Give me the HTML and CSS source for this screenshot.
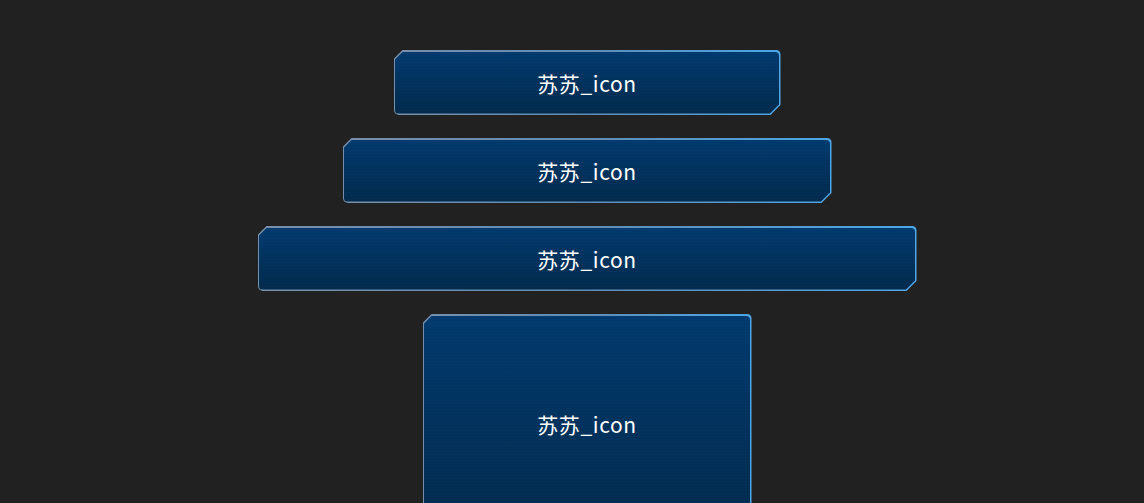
FILE: index.html
```html
<!DOCTYPE html>
<html lang="zh-CN">
<head>
  <meta charset="UTF-8">
  <title>苏苏_icon</title>
  <link rel="stylesheet" href="styles.css">
</head>
<body>

  <!-- Button list -->
  <div class="stack">
    <div class="tech-btn btn-sm">
      <div class="tech-inner">苏苏_icon</div>
    </div>
    <div class="tech-btn btn-md">
      <div class="tech-inner">苏苏_icon</div>
    </div>
    <div class="tech-btn btn-lg">
      <div class="tech-inner">苏苏_icon</div>
    </div>
    <div class="tech-btn btn-tall">
      <div class="tech-inner">苏苏_icon</div>
    </div>
  </div>

</body>
</html>
```

FILE: styles.css
```css
* {
  box-sizing: border-box;
  margin: 0;
  padding: 0;
}

body, html {
  height: 100%;
  background: #212121;
  font-family: "Noto Sans CJK SC", "Noto Sans", sans-serif;
  overflow: hidden;
}

.stack {
  display: flex;
  flex-direction: column;
  align-items: center;
  gap: 23px;
  padding-top: 50px;
  padding-left: 30px;
}

.tech-btn {
  height: 65px;
  padding: 1.5px;
  border-radius: 5px;
  background: linear-gradient(90deg, #7790aa 0%, #5f8db5 50%, #4ea6e6 100%);
  clip-path: polygon(9px 0, 100% 0, 100% calc(100% - 10px), calc(100% - 10px) 100%, 0 100%, 0 9px);
}

.tech-inner {
  height: 100%;
  display: flex;
  align-items: center;
  justify-content: center;
  border-radius: 4px;
  background:
    repeating-linear-gradient(0deg, rgba(255, 255, 255, 0.008) 0 1px, transparent 1px 3px),
    linear-gradient(180deg, #023a6e 0%, #02325d 50%, #022a4d 100%);
  clip-path: polygon(8px 0, 100% 0, 100% calc(100% - 9px), calc(100% - 9px) 100%, 0 100%, 0 8px);
  color: #ffffff;
  font-size: 21px;
  letter-spacing: 0.6px;
}

.btn-sm {
  width: 387px;
}

.btn-md {
  width: 489px;
}

.btn-lg {
  width: 659px;
}

.btn-tall {
  width: 329px;
  height: 220px;
}
```
